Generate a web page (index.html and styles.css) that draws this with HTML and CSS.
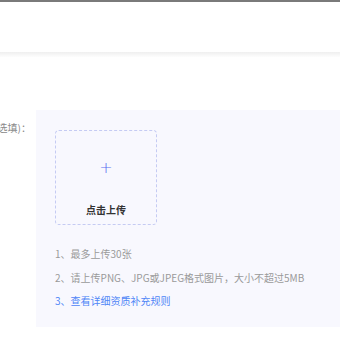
FILE: index.html
```html
<!DOCTYPE html>
<html lang="zh-CN">
<head>
<meta charset="utf-8">
<link rel="stylesheet" href="styles.css">
</head>
<body>
<div class="header"></div>
<div class="shade"></div>
<div class="form-row">
  <div class="label"><span>其他资质补充(选填)：</span></div>
  <div class="panel">
    <div class="upload">
      <span class="plus">+</span>
      <span class="upload-text">点击上传</span>
    </div>
    <ul class="tips">
      <li>1、最多上传30张</li>
      <li>2、请上传PNG、JPG或JPEG格式图片，大小不超过5MB</li>
      <li class="link">3、查看详细资质补充规则</li>
    </ul>
  </div>
</div>
</body>
</html>
```
FILE: styles.css
```css
html, body {
  margin: 0;
  padding: 0;
  background: #ffffff;
  font-family: "Noto Sans CJK SC", "Noto Sans", sans-serif;
  overflow: hidden;
}
.header {
  height: 50px;
  border-top: 2px solid #7a7a7a;
  background: #ffffff;
}
.shade {
  height: 5px;
  background: linear-gradient(#efefef, #fdfdfd);
}
.form-row {
  display: flex;
  margin-top: 53px;
}
.label {
  width: 31px;
  margin-right: 5px;
  display: flex;
  justify-content: flex-end;
  padding-top: 11px;
  font-size: 10px;
  line-height: 14px;
  color: #8a8a8a;
  white-space: nowrap;
}
.panel {
  flex: 1;
  background: #f8f8fe;
  padding: 20px 0 20px 19px;
  height: 177px;
}
.upload {
  width: 100px;
  height: 93px;
  border: 1px dashed #c5cbf3;
  border-radius: 4px;
  display: flex;
  flex-direction: column;
  align-items: center;
  box-sizing: content-box;
}
.plus {
  margin-top: 28px;
  font-size: 16px;
  line-height: 18px;
  color: #5a6ff0;
  font-family: "DejaVu Sans", sans-serif;
  font-weight: 300;
}
.upload-text {
  margin-top: 26px;
  font-size: 10px;
  line-height: 14px;
  color: #333333;
  font-weight: 600;
}
.tips {
  list-style: none;
  margin: 0;
  padding: 0;
  margin-top: 22px;
}
.tips li {
  font-size: 10px;
  line-height: 14px;
  color: #9a9a9a;
  margin-bottom: 9.5px;
  white-space: nowrap;
}
.tips li.link {
  color: #4f86f7;
}
```
